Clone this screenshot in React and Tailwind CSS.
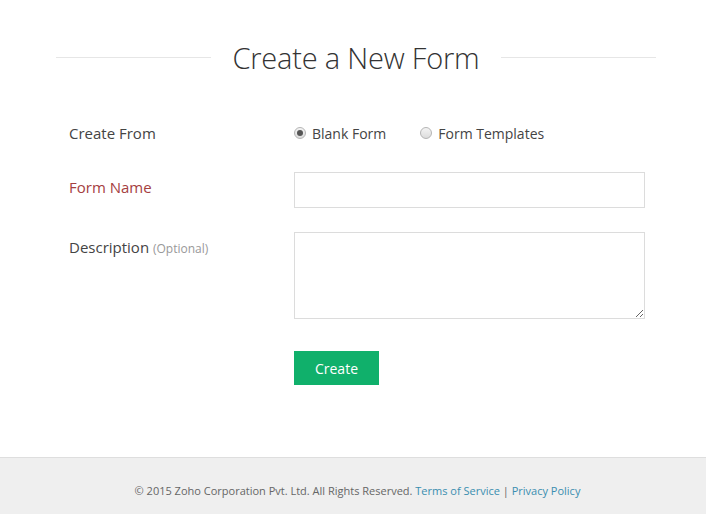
import React from "react";

function Radio({ checked }) {
  return (
    <span className="inline-flex items-center justify-center w-[12px] h-[12px] rounded-full border border-[#b5b5b5] bg-gradient-to-b from-[#f4f4f4] to-[#dcdcdc]">
      {checked && <span className="w-[6px] h-[6px] rounded-full bg-[#555]" />}
    </span>
  );
}

export default function App() {
  return (
    <div className="min-h-[514px] flex flex-col bg-white text-[#444]" style={{ fontFamily: '"Open Sans", "Liberation Sans", sans-serif' }}>
      <div className="flex-1">
        <div className="w-[600px] ml-[56px]">
          <div className="flex items-center pt-[35px] h-[79px]">
            <div className="flex-1 h-px bg-[#e6e6e6]" />
            <h1 className="px-[21px] text-[29px] font-light text-[#333] leading-none tracking-[-0.2px]">Create a New Form</h1>
            <div className="flex-1 h-px bg-[#e6e6e6]" />
          </div>

          <div className="mt-[43px] pl-[13px] grid grid-cols-[225px_351px] text-[15px]">
            <div className="h-[22px] leading-[22px] text-[#444]">Create From</div>
            <div className="h-[22px] flex items-center text-[14px]">
              <label className="flex items-center">
                <Radio checked />
                <span className="ml-[6px] text-[#444]">Blank Form</span>
              </label>
              <label className="flex items-center ml-[34px]">
                <Radio />
                <span className="ml-[6px] text-[#444]">Form Templates</span>
              </label>
            </div>

            <div className="mt-[28px] h-[36px] leading-[22px] pt-[4px] text-[#a5403f]">Form Name</div>
            <div className="mt-[28px]">
              <input className="block w-[351px] h-[36px] border border-[#dcdcdc] bg-white outline-none" />
            </div>

            <div className="mt-[24px] leading-[22px] pt-[4px] text-[#444]">
              Description <span className="text-[12px] text-[#999]">(Optional)</span>
            </div>
            <div className="mt-[24px]">
              <textarea className="block w-[351px] h-[87px] border border-[#dcdcdc] bg-white outline-none resize" />
            </div>

            <div />
            <div className="mt-[32px]">
              <button className="w-[85px] h-[34px] bg-[#10b06b] text-white text-[14px]">Create</button>
            </div>
          </div>
        </div>
      </div>
      <footer className="h-[57px] border-t border-[#dedede] bg-[#efefef] flex items-start justify-center pt-[25px] pl-[9px] text-[11px] text-[#666]">
        <span>
          © 2015 Zoho Corporation Pvt. Ltd. All Rights Reserved.{" "}
          <a className="text-[#3a8eb0]">Terms of Service</a> | <a className="text-[#3a8eb0]">Privacy Policy</a>
        </span>
      </footer>
    </div>
  );
}
